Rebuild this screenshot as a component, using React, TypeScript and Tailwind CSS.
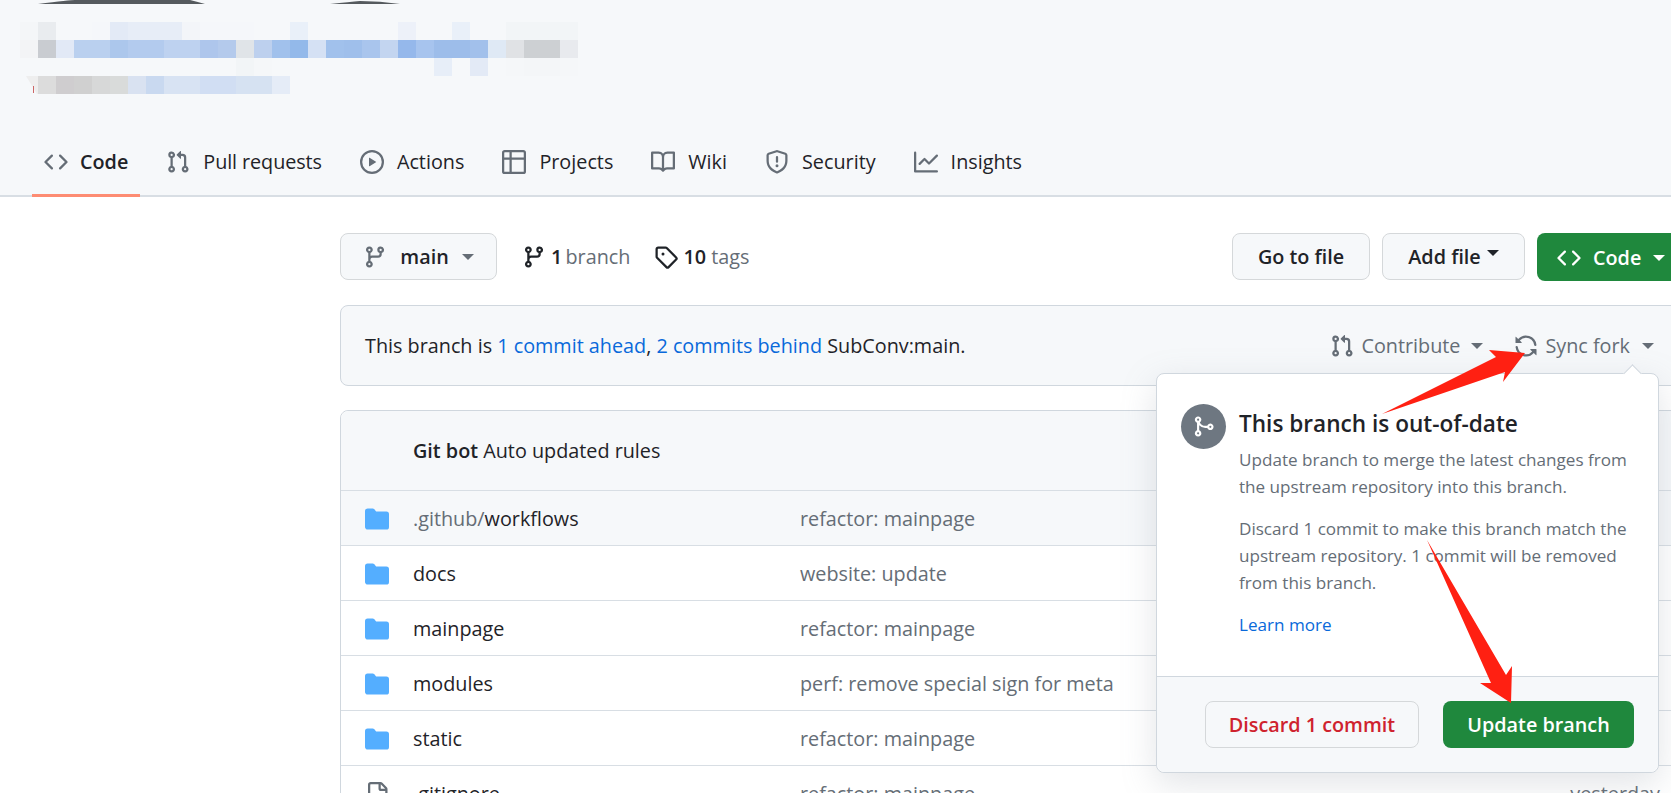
import React from 'react';

// octicons, 16px grid
const ICONS = {
  code: 'm11.28 3.22 4.25 4.25a.75.75 0 0 1 0 1.06l-4.25 4.25a.749.749 0 0 1-1.275-.326.749.749 0 0 1 .215-.734L13.94 8l-3.72-3.72a.749.749 0 0 1 .326-1.275.749.749 0 0 1 .734.215Zm-6.56 0a.751.751 0 0 1 1.042.018.751.751 0 0 1 .018 1.042L2.06 8l3.72 3.72a.749.749 0 0 1-.326 1.275.749.749 0 0 1-.734-.215L.47 8.53a.75.75 0 0 1 0-1.06Z',
  pull: 'M1.5 3.25a2.25 2.25 0 1 1 3 2.122v5.256a2.251 2.251 0 1 1-1.5 0V5.372A2.25 2.25 0 0 1 1.5 3.25Zm5.677-.177L9.573.677A.25.25 0 0 1 10 .854V2.5h1A2.5 2.5 0 0 1 13.5 5v5.628a2.251 2.251 0 1 1-1.5 0V5a1 1 0 0 0-1-1h-1v1.646a.25.25 0 0 1-.427.177L7.177 3.427a.25.25 0 0 1 0-.354ZM3.75 2.5a.75.75 0 1 0 0 1.5.75.75 0 0 0 0-1.5Zm0 9.5a.75.75 0 1 0 0 1.5.75.75 0 0 0 0-1.5Zm8.25.75a.75.75 0 1 0 1.5 0 .75.75 0 0 0-1.5 0Z',
  play: 'M8 0a8 8 0 1 1 0 16A8 8 0 0 1 8 0ZM1.5 8a6.5 6.5 0 1 0 13 0 6.5 6.5 0 0 0-13 0Zm4.879-2.773 4.264 2.559a.25.25 0 0 1 0 .428l-4.264 2.559A.25.25 0 0 1 6 10.559V5.442a.25.25 0 0 1 .379-.215Z',
  table: 'M0 1.75C0 .784.784 0 1.75 0h12.5C15.216 0 16 .784 16 1.75v12.5A1.75 1.75 0 0 1 14.25 16H1.75A1.75 1.75 0 0 1 0 14.25ZM6.5 6.5v8h7.75a.25.25 0 0 0 .25-.25V6.5Zm8-1.5V1.75a.25.25 0 0 0-.25-.25H6.5V5Zm-13 1.5v7.75c0 .138.112.25.25.25H5v-8ZM5 5V1.5H1.75a.25.25 0 0 0-.25.25V5Z',
  book: 'M0 1.75A.75.75 0 0 1 .75 1h4.253c1.227 0 2.317.59 3 1.501A3.743 3.743 0 0 1 11.006 1h4.245a.75.75 0 0 1 .75.75v10.5a.75.75 0 0 1-.75.75h-4.507a2.25 2.25 0 0 0-1.591.659l-.622.621a.75.75 0 0 1-1.06 0l-.622-.621A2.25 2.25 0 0 0 5.258 13H.75a.75.75 0 0 1-.75-.75Zm7.251 10.324.004-5.073-.002-2.253A2.25 2.25 0 0 0 5.003 2.5H1.5v9h3.757a3.75 3.75 0 0 1 1.994.574ZM8.755 4.75l-.004 7.322a3.752 3.752 0 0 1 1.992-.572H14.5v-9h-3.495a2.25 2.25 0 0 0-2.25 2.25Z',
  shield: 'M7.467.133a1.748 1.748 0 0 1 1.066 0l5.25 1.68A1.75 1.75 0 0 1 15 3.48V7c0 1.566-.32 3.182-1.303 4.682-.983 1.498-2.585 2.813-5.032 3.855a1.697 1.697 0 0 1-1.33 0c-2.447-1.042-4.049-2.357-5.032-3.855C1.32 10.182 1 8.566 1 7V3.48a1.75 1.75 0 0 1 1.217-1.667Zm.61 1.429a.25.25 0 0 0-.153 0l-5.25 1.68a.25.25 0 0 0-.174.238V7c0 1.358.275 2.666 1.057 3.86.784 1.194 2.121 2.34 4.366 3.297a.196.196 0 0 0 .154 0c2.245-.956 3.582-2.104 4.366-3.298C13.225 9.666 13.5 8.36 13.5 7V3.48a.251.251 0 0 0-.174-.237l-5.25-1.68ZM8.75 4.75v3a.75.75 0 0 1-1.5 0v-3a.75.75 0 0 1 1.5 0ZM9 10.5a1 1 0 1 1-2 0 1 1 0 0 1 2 0Z',
  graph: 'M1.5 1.75V13.5h13.75a.75.75 0 0 1 0 1.5H.75a.75.75 0 0 1-.75-.75V1.75a.75.75 0 0 1 1.5 0Zm14.28 2.53-5.25 5.25a.75.75 0 0 1-1.06 0L7 7.06 4.28 9.78a.751.751 0 0 1-1.042-.018.751.751 0 0 1-.018-1.042l3.25-3.25a.75.75 0 0 1 1.06 0L10 7.94l4.72-4.72a.751.751 0 0 1 1.042.018.751.751 0 0 1 .018 1.042Z',
  branch: 'M9.5 3.25a2.25 2.25 0 1 1 3 2.122V6A2.5 2.5 0 0 1 10 8.5H6a1 1 0 0 0-1 1v1.128a2.251 2.251 0 1 1-1.5 0V5.372a2.25 2.25 0 1 1 1.5 0v1.836A2.493 2.493 0 0 1 6 7h4a1 1 0 0 0 1-1v-.628A2.25 2.25 0 0 1 9.5 3.25Zm-6 0a.75.75 0 1 0 1.5 0 .75.75 0 0 0-1.5 0Zm8.25-.75a.75.75 0 1 0 0 1.5.75.75 0 0 0 0-1.5ZM4.25 12a.75.75 0 1 0 0 1.5.75.75 0 0 0 0-1.5Z',
  tag: 'M1 7.775V2.75C1 1.784 1.784 1 2.75 1h5.025c.464 0 .91.184 1.238.513l6.25 6.25a1.75 1.75 0 0 1 0 2.474l-5.026 5.026a1.75 1.75 0 0 1-2.474 0l-6.25-6.25A1.752 1.752 0 0 1 1 7.775Zm1.5 0c0 .066.026.13.073.177l6.25 6.25a.25.25 0 0 0 .354 0l5.025-5.025a.25.25 0 0 0 0-.354l-6.25-6.25a.25.25 0 0 0-.177-.073H2.75a.25.25 0 0 0-.25.25ZM6 5a1 1 0 1 1 0 2 1 1 0 0 1 0-2Z',
  sync: 'M1.705 8.005a.75.75 0 0 1 .834.656 5.5 5.5 0 0 0 9.592 2.97l-1.204-1.204a.25.25 0 0 1 .177-.427h3.646a.25.25 0 0 1 .25.25v3.646a.25.25 0 0 1-.427.177l-1.38-1.38A7.002 7.002 0 0 1 1.05 8.84a.75.75 0 0 1 .656-.834ZM8 2.5a5.487 5.487 0 0 0-4.131 1.869l1.204 1.204A.25.25 0 0 1 4.896 6H1.25A.25.25 0 0 1 1 5.75V2.104a.25.25 0 0 1 .427-.177l1.38 1.38A7.002 7.002 0 0 1 14.95 7.16a.75.75 0 0 1-1.49.178A5.5 5.5 0 0 0 8 2.5Z',
  merge: 'M5.45 5.154A4.25 4.25 0 0 0 9.25 7.5h1.378a2.251 2.251 0 1 1 0 1.5H9.25A5.734 5.734 0 0 1 5 7.123v3.505a2.25 2.25 0 1 1-1.5 0V5.372a2.25 2.25 0 1 1 1.95-.218ZM4.25 13.5a.75.75 0 1 0 0-1.5.75.75 0 0 0 0 1.5Zm8.5-4.5a.75.75 0 1 0 0-1.5.75.75 0 0 0 0 1.5ZM5 3.25a.75.75 0 1 0-1.5 0 .75.75 0 0 0 1.5 0Z',
  folder: 'M1.75 1A1.75 1.75 0 0 0 0 2.75v10.5C0 14.216.784 15 1.75 15h12.5A1.75 1.75 0 0 0 16 13.25v-8.5A1.75 1.75 0 0 0 14.25 3H7.5a.25.25 0 0 1-.2-.1l-.9-1.2C5.97 1.13 5.286 1 4.75 1H1.75Z',
  file: 'M2 1.75C2 .784 2.784 0 3.75 0h6.586c.464 0 .909.184 1.237.513l2.914 2.914c.329.328.513.773.513 1.237v9.586A1.75 1.75 0 0 1 13.25 16h-9.5A1.75 1.75 0 0 1 2 14.25Zm1.75-.25a.25.25 0 0 0-.25.25v12.5c0 .138.112.25.25.25h9.5a.25.25 0 0 0 .25-.25V6h-2.75A1.75 1.75 0 0 1 9 4.25V1.5Zm6.75.062V4.25c0 .138.112.25.25.25h2.688l-.011-.013-2.914-2.914-.013-.011Z',
};

const Icon: React.FC<{ name: keyof typeof ICONS; className?: string }> = ({ name, className }) => (
  <svg viewBox="0 0 16 16" fill="currentColor" className={`shrink-0 ${className || 'w-6 h-6'}`}>
    <path d={ICONS[name]} />
  </svg>
);

const tabs: { label: string; icon: keyof typeof ICONS; active?: boolean }[] = [
  { label: 'Code', icon: 'code', active: true },
  { label: 'Pull requests', icon: 'pull' },
  { label: 'Actions', icon: 'play' },
  { label: 'Projects', icon: 'table' },
  { label: 'Wiki', icon: 'book' },
  { label: 'Security', icon: 'shield' },
  { label: 'Insights', icon: 'graph' },
];

const rows = [
  { name: '.github/', rest: 'workflows', msg: 'refactor: mainpage', shaded: true },
  { name: 'docs', msg: 'website: update' },
  { name: 'mainpage', msg: 'refactor: mainpage' },
  { name: 'modules', msg: 'perf: remove special sign for meta' },
  { name: 'static', msg: 'refactor: mainpage' },
  { name: '.gitignore', msg: 'refactor: mainpage', file: true, date: 'yesterday' },
];

// pixelated (censored) repo title in the header
const mosaic: [number, string[]][] = [
  [22, ['#f4f6f8', '#e9ecef', '', '', '#f5f7fa', '#e3eaf6', '#e7edf7', '#e7edf7', '#e7edf7', '#f3f5f9', '#f5f7fa', '#f5f7fa', '#f5f7fa', '', '', '#e9f0f9', '', '', '', '', '', '#edf1f9', '', '', '#e9f0f9', '', '', '#f2f5f7', '#f2f5f7', '#f2f5f7', '#f2f5f7']],
  [40, ['#f3f4f6', '#c9ccd1', '#e2e9f6', '#bad0ef', '#bad0ef', '#acc7ec', '#b3cbee', '#b3cbee', '#bed2f0', '#bed2f0', '#aec6ec', '#b4caec', '#e0e4e8', '#bdd0ee', '#a1c1ec', '#93b9ea', '#d5e1f4', '#a1c1ec', '#9fbfeb', '#a9c5ed', '#c3d5f0', '#95b8eb', '#a7c4ee', '#9dbdea', '#9dbdea', '#a2c0eb', '#dfe9f5', '#e0e2e5', '#cdd0d3', '#cdd0d3', '#e8eaee']],
  [58, ['', '', '', '', '', '', '', '', '', '', '', '', '#f2f5f7', '#f5f7f9', '', '', '', '', '', '', '', '', '', '#e7eef8', '', '#e3eaf6', '', '#f5f7f9', '#f4f6f8', '#f4f6f8', '#f5f7f9']],
  [76, ['', '#dcdcdc', '#cfcdcf', '#d0d0d0', '#d7d8d8', '#d9dbda', '#d9e2f1', '#c9d9f0', '#d8e3f3', '#d8e3f3', '#d1def3', '#d1def3', '#d6e2f2', '#d6e2f2', '#e5ecf7']],
];

const Caret: React.FC<{ className?: string }> = ({ className }) => (
  <span className={`inline-block w-0 h-0 border-x-[6px] border-x-transparent border-t-[6px] border-t-current ${className || ''}`} />
);

const BUTTON = 'h-[47px] flex items-center justify-center rounded-lg border border-[#d5d8da] bg-[#f6f8fa] font-semibold';

const App: React.FC = () => {
  return (
    <div className="relative w-[1671px] h-[793px] overflow-hidden bg-white text-[#1f2328] text-[19.8px] font-['Open_Sans',sans-serif]">
      <header className="h-[197px] bg-[#f6f8fa] border-b-2 border-[#d8dee4] flex flex-col justify-between">
        <svg width="600" height="100" viewBox="0 0 600 100" className="block">
          <path d="M38 4 Q70 0 75 0 H190 Q198 2 205 4Z" fill="#555a5e" />
          <path d="M330 4 Q350 2 360 1 Q380 1 400 4Z" fill="#555a5e" />
          {mosaic.map(([y, cells]) =>
            cells.map((c, i) => c && <rect key={`${y}-${i}`} x={20 + i * 18} y={y} width="18" height="18" fill={c} />)
          )}
          <polygon points="26,76 38,76 38,94 37,94" fill="#eeeeee" />
          <rect x="33" y="86" width="1" height="7" fill="#c66" />
        </svg>
        <nav className="flex gap-[14px] pl-8 h-[55px] -mb-[2px]">
          {tabs.map((t) => (
            <a
              key={t.label}
              className={`flex items-center px-3 pb-[13px] border-b-[3px] ${t.active ? 'gap-3 border-[#fd8c73] font-semibold' : 'gap-[13px] border-transparent'}`}
            >
              <Icon name={t.icon} className="w-6 h-6 text-[#656d76]" />
              <span className={t.label === 'Pull requests' ? 'tracking-[-0.08px]' : ''}>{t.label}</span>
            </a>
          ))}
        </nav>
      </header>

      <main className="ml-[340px] w-[1345px]">
        <div className="flex items-start mt-[36px]">
          <button className={`${BUTTON} w-[157px] gap-[13px]`}>
            <Icon name="branch" className="w-6 h-6 text-[#656d76]" />
            <span>main</span>
            <Caret className="text-[#656d76]" />
          </button>
          <div className="flex items-center h-[47px] ml-[25px] gap-[5px]">
            <Icon name="branch" className="w-6 h-6" />
            <span>
              <b className="font-semibold">1</b> <span className="-ml-[2px] text-[#656d76]">branch</span>
            </span>
          </div>
          <div className="flex items-center h-[47px] ml-[24px] gap-[5px]">
            <Icon name="tag" className="w-6 h-6" />
            <span>
              <b className="font-semibold">10</b> <span className="text-[#656d76]">tags</span>
            </span>
          </div>
          <button className={`${BUTTON} w-[138px] ml-auto`}>Go to file</button>
          <button className={`${BUTTON} w-[143px] ml-3 gap-[6px]`}>
            Add file
            <Caret className="-mt-2" />
          </button>
          <button className="h-[48px] w-[148px] ml-3 pt-[1px] flex items-center pl-5 gap-3 rounded-lg bg-[#1f883d] text-white font-semibold">
            <Icon name="code" className="w-6 h-6" />
            <span>Code</span>
            <Caret />
          </button>
        </div>

        <div className="h-[81px] mt-[24px] pl-6 pr-[30px] flex items-center rounded-lg border border-[#d0d7de] bg-[#f6f8fa]">
          <p>
            This branch is <a className="text-[#0969da]">1 commit ahead</a>, <a className="text-[#0969da]">2 commits behind</a> SubConv:main.
          </p>
          <div className="ml-auto flex items-center gap-[7px] text-[#656d76]">
            <Icon name="pull" className="w-6 h-6" />
            <span>Contribute</span>
            <Caret className="ml-[4px]" />
          </div>
          <div className="ml-[31px] flex items-center gap-[7px] text-[#656d76]">
            <Icon name="sync" className="w-6 h-6" />
            <span>Sync fork</span>
            <Caret className="ml-[5px]" />
          </div>
        </div>

        <div className="mt-[24px] rounded-t-lg border border-[#d0d7de]">
          <div className="h-[79px] pl-[72px] flex items-center rounded-t-lg bg-[#f6f8fa]">
            <p>
              <b className="font-semibold">Git bot</b> Auto updated rules
            </p>
          </div>
          {rows.map((r) => (
            <div
              key={r.name}
              className={`h-[55px] flex items-center border-t border-[#d8dee4] pt-[2px] pl-6 pr-[24px] ${r.shaded ? 'bg-[#f6f8fa]' : ''}`}
            >
              {r.file ? (
                <Icon name="file" className="w-6 h-6 text-[#656d76]" />
              ) : (
                <Icon name="folder" className="w-6 h-6 text-[#54aeff]" />
              )}
              <span className="ml-6 w-[387px]">
                {r.rest ? <span className="text-[#656d76]">{r.name}</span> : r.name}
                {r.rest}
              </span>
              <span className="text-[#656d76]">{r.msg}</span>
              {r.date && <span className="ml-auto text-[#656d76]">{r.date}</span>}
            </div>
          ))}
        </div>
      </main>

      {/* Sync fork popover */}
      <div className="absolute left-[1156px] top-[373px] w-[503px] h-[400px] flex flex-col rounded-lg border border-[#d0d7de] bg-white shadow-[0_11px_34px_rgba(140,149,159,0.25)]">
        <span className="absolute -top-[7px] left-[469px] w-[13px] h-[13px] rotate-45 bg-white border-l border-t border-[#d0d7de]" />
        <div className="flex-1 flex gap-[13px] pl-6 pr-4 pt-[30px]">
          <span className="w-[45px] h-[45px] shrink-0 rounded-full bg-[#6e7781] flex items-center justify-center text-white">
            <Icon name="merge" className="w-[23px] h-[23px]" />
          </span>
          <div>
            <h3 className="text-[22.6px] leading-[30px] mt-[5px] font-semibold">This branch is out-of-date</h3>
            <p className="text-[17.1px] leading-[27px] mt-[7px] text-[#656d76]">
              Update branch to merge the latest changes from the upstream repository into this branch.
            </p>
            <p className="text-[17.1px] leading-[27px] mt-[15px] text-[#656d76]">
              Discard 1 commit to make this branch match the upstream repository. 1 commit will be removed from this branch.
            </p>
            <a className="block text-[17.1px] leading-[27px] mt-[15px] text-[#0969da]">Learn more</a>
          </div>
        </div>
        <div className="h-[96px] flex justify-end gap-6 pt-6 pr-6 rounded-b-lg border-t border-[#d0d7de] bg-[#f6f8fa]">
          <button className={`${BUTTON} w-[214px] text-[#cf222e]`}>Discard 1 commit</button>
          <button className="h-[47px] w-[191px] rounded-lg bg-[#1f883d] text-white font-semibold">Update branch</button>
        </div>
      </div>

      {/* red annotation arrows */}
      <svg className="absolute inset-0 pointer-events-none" width="1671" height="793" viewBox="0 0 1671 793">
        <path d="M1382 414 L1496 357 L1489 350 L1525 353 L1503 382 L1505 372Z" fill="#ff2012" />
        <path d="M1427 540 L1491 683 L1480 683 L1511 703 L1512 666 L1506 675Z" fill="#ff2012" />
      </svg>
    </div>
  );
};

export default App;
